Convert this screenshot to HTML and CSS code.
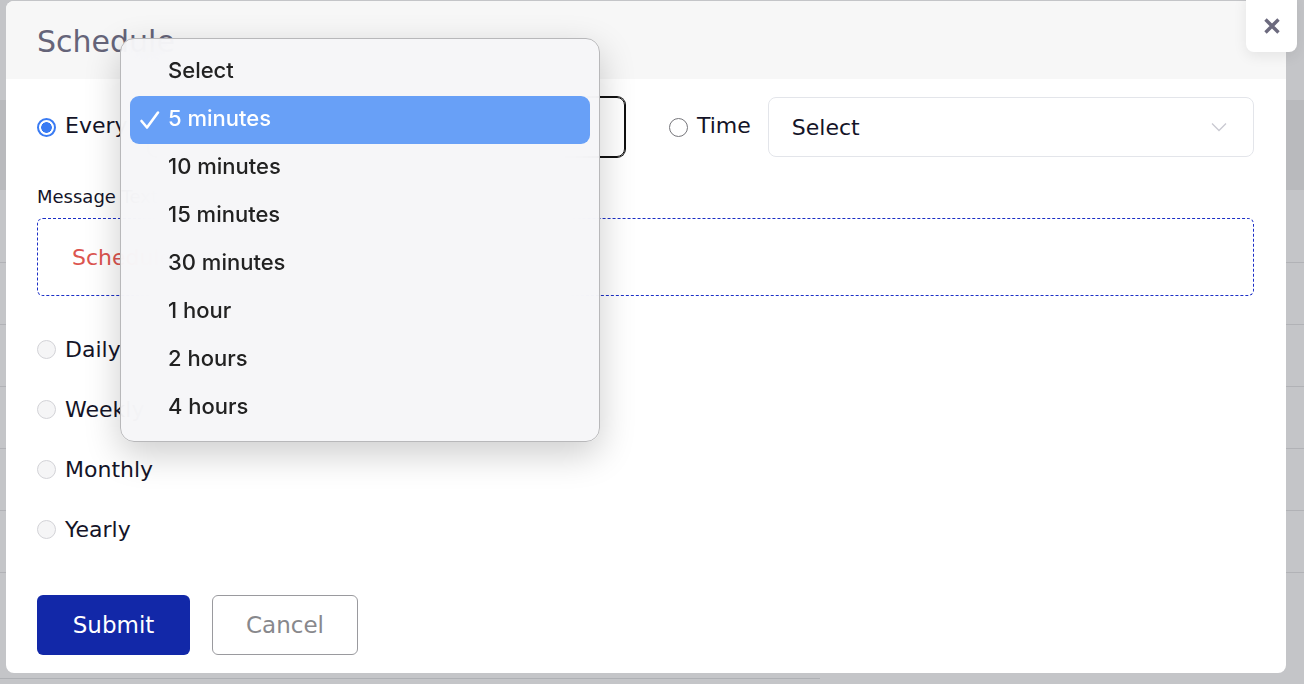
FILE: index.html
```html
<!DOCTYPE html>
<html>
  <head>
    <meta charset="utf-8">
    <title>Schedule</title>
    <link rel="stylesheet" href="styles.css">
  </head>
  <body>
    <div class="modal">
      <div class="modal-head"><h2>Schedule</h2></div>
      <form class="modal-body">
        <div class="freq-row">
          <div class="freq">
            <label class="opt"><span class="radio on"></span>Every</label>
            <div class="field focus"></div>
          </div>
          <div class="freq">
            <label class="opt"><span class="radio plain"></span>Time</label>
            <div class="field">
              <span>Select</span>
              <svg width="16" height="10" viewBox="0 0 16 10"><polyline points="1,1.5 8,8.5 15,1.5" fill="none" stroke="#c9c9d1" stroke-width="1.3"/></svg>
            </div>
          </div>
        </div>
        <div class="field-label">Message Text</div>
        <div class="message">Scheduled message will appear here</div>
        <ul class="repeat">
          <li><span class="radio"></span>Daily</li>
          <li><span class="radio"></span>Weekly</li>
          <li><span class="radio"></span>Monthly</li>
          <li><span class="radio"></span>Yearly</li>
        </ul>
        <div class="actions">
          <button type="button" class="btn btn-primary">Submit</button>
          <button type="button" class="btn btn-ghost">Cancel</button>
        </div>
      </form>
    </div>

    <a href="javascript:;" class="close">
      <svg width="16" height="16" viewBox="0 0 16 16"><path d="M1.5 1.5 14.5 14.5 M14.5 1.5 1.5 14.5" stroke="#6c6a7e" stroke-width="3.4"/></svg>
    </a>

    <!-- open list of the "Every" select -->
    <ul class="picker">
      <li>Select</li>
      <li class="sel">
        <svg class="tick" width="22" height="22" viewBox="0 0 22 22"><polyline points="2.5,12 8,18.5 19,3.5" fill="none" stroke="#fff" stroke-width="2.6" stroke-linecap="round" stroke-linejoin="round"/></svg>
        5 minutes
      </li>
      <li>10 minutes</li>
      <li>15 minutes</li>
      <li>30 minutes</li>
      <li>1 hour</li>
      <li>2 hours</li>
      <li>4 hours</li>
    </ul>
  </body>
</html>
```

FILE: styles.css
```css
*{ margin:0; padding:0; box-sizing:border-box; list-style:none; }
a{ text-decoration:none; }
body{ width:1304px; height:684px; overflow:hidden; padding-top:1px;
  font-family:"DejaVu Sans", sans-serif;
  background:
    linear-gradient(#b9babd,#b9babd) 0 100px / 100% 90px no-repeat,
    repeating-linear-gradient(#b1b2b6 0 1px, transparent 1px 62px) 0 262px / 100% 340px no-repeat,
    linear-gradient(#aeb0b4,#aeb0b4) 0 678px / 820px 1px no-repeat,
    #c4c5c8; }

/* dialog */
.modal{ width:1280px; height:672px; margin-left:6px; background:#fff;
  border-radius:8px; overflow:hidden; display:flex; flex-direction:column; }
.modal-head{ height:78px; background:#f7f7f7; display:flex; align-items:center; padding-left:31px; }
.modal-head h2{ font-size:30px; font-weight:normal; color:#656479; margin-top:2px; }
.modal-body{ flex:1; display:flex; flex-direction:column; padding:18px 32px 0 31px; }

.freq-row{ display:grid; grid-template-columns:588px 1fr; column-gap:44px; height:60px; }
.freq{ display:flex; align-items:center; }
.opt{ display:flex; align-items:center; gap:9px; padding-bottom:4px; font-size:22px; color:#141428; }
.opt .radio{ margin-top:4px; }
.field{ flex:1; height:60px; margin-left:17px; border:1px solid #e3e5ea; border-radius:8px;
  display:flex; align-items:center; justify-content:space-between;
  padding:0 26px 0 23px; font-size:22px; color:#141428; }
.field.focus{ margin-left:20px; border-color:#111; box-shadow:0 0 0 1px #111; }

.radio{ flex:none; width:19px; height:19px; border-radius:50%;
  border:1px solid #d3d3d7; background:#f5f5f6; }
.radio.plain{ border:1.5px solid #76767b; background:#fff; }
.radio.on{ border:2px solid #3a7bf3; background:radial-gradient(circle, #3a7bf3 0 5px, #fff 5.6px); }

.field-label{ margin-top:30px; font-size:18px; line-height:20px; color:#141428; }
.message{ margin-top:11px; height:78px; border:1px dashed #1c2fc6; border-radius:6px;
  display:flex; align-items:center; padding-left:34px; font-size:22px; color:#dc5550; }

.repeat{ margin-top:23px; }
.repeat li{ height:60px; display:flex; align-items:center; gap:9px; font-size:22px; color:#141428; }

.actions{ margin-top:36px; display:flex; gap:22px; }
.btn{ height:60px; border-radius:6px; font-family:inherit; font-size:23px; cursor:pointer; }
.btn-primary{ width:153px; background:#1228a8; color:#fff; border:none; }
.btn-ghost{ width:146px; background:#fff; color:#88888c; border:1px solid #9a9a9e; }

/* close button sits over the dialog corner */
.close{ position:absolute; left:1246px; top:-8px; width:51px; height:60px; padding-top:8px;
  background:#fff; border-radius:8px; display:flex; align-items:center; justify-content:center;
  box-shadow:0 4px 14px rgba(0,0,0,.08); }

/* native-looking popup list */
.picker{ position:absolute; left:120px; top:38px; width:480px; padding:9px;
  border:1px solid #b8b8ba; border-radius:14px;
  background:rgba(246,246,248,.95); backdrop-filter:blur(20px);
  box-shadow:0 12px 36px rgba(0,0,0,.2);
  font-family:Inter, "Noto Sans", sans-serif; font-size:22px; font-weight:500; color:#222; }
.picker li{ position:relative; height:48px; display:flex; align-items:center;
  padding:0 0 4px 38px; border-radius:9px; }
.picker li.sel{ background:#68a0f7; color:#fff; }
.picker .tick{ position:absolute; left:9px; top:13px; }
```
